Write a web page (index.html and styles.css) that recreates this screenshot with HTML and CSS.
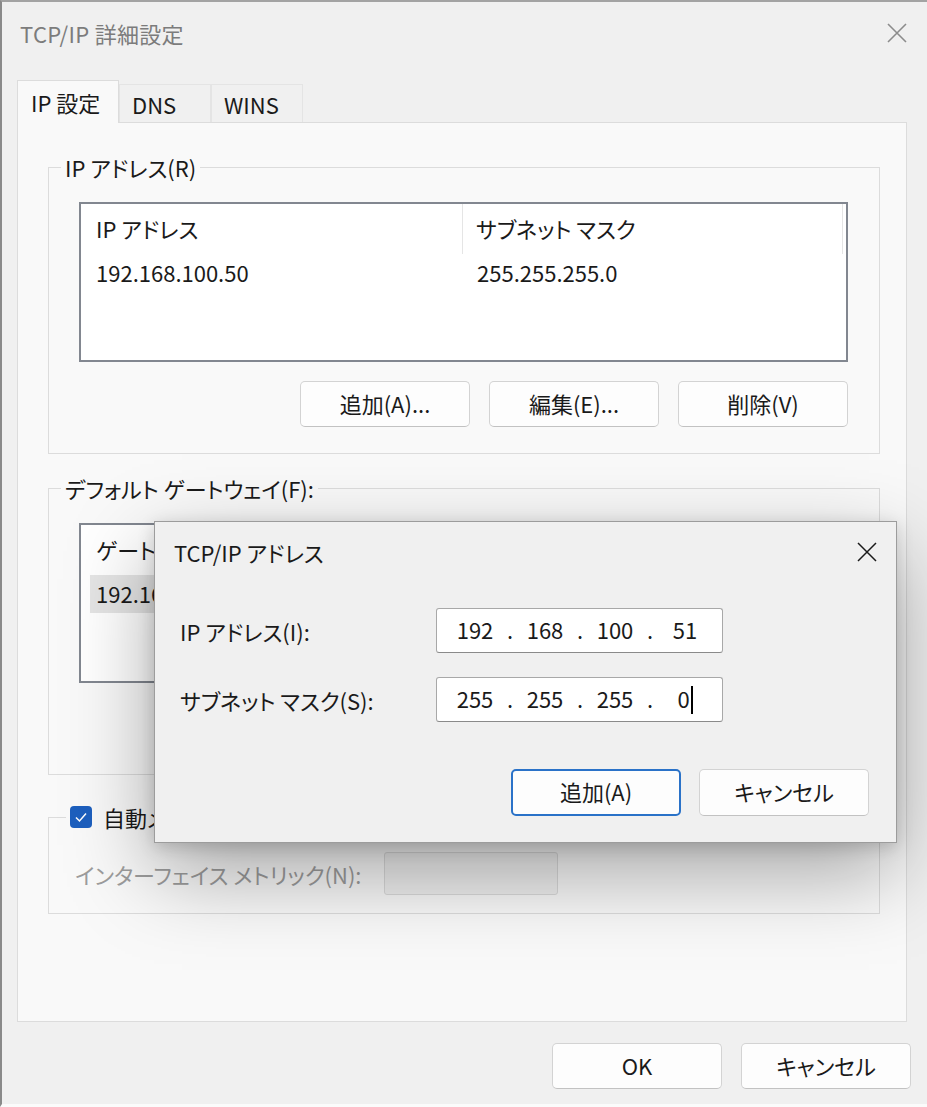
FILE: index.html
```html
<!DOCTYPE html>
<html lang="ja">
<head>
    <meta charset="UTF-8">
    <meta name="viewport" content="width=device-width, initial-scale=1.0">
    <title>TCP/IP 詳細設定</title>
    <link rel="stylesheet" href="styles.css">
</head>
<body>
    <div class="window">
        <div class="titlebar">
            <span class="title">TCP/IP 詳細設定</span>
            <span class="close-btn">
                <svg width="20" height="20" viewBox="0 0 20 20"><path d="M1 1 L19 19 M19 1 L1 19" stroke="#8c8c8c" stroke-width="1.6" fill="none"/></svg>
            </span>
        </div>

        <div class="tabs">
            <div class="tab selected">IP 設定</div>
            <div class="tab">DNS</div>
            <div class="tab">WINS</div>
        </div>

        <div class="tab-panel">
            <fieldset class="group">
                <legend>IP アドレス(R)</legend>
                <div class="group-body">
                    <div class="list">
                        <div class="list-head">
                            <div class="col">IP アドレス</div>
                            <div class="col">サブネット マスク</div>
                            <div class="col"></div>
                        </div>
                        <div class="list-row">
                            <div class="cell">192.168.100.50</div>
                            <div class="cell">255.255.255.0</div>
                        </div>
                    </div>
                    <div class="btn-row">
                        <button>追加(A)...</button>
                        <button>編集(E)...</button>
                        <button>削除(V)</button>
                    </div>
                </div>
            </fieldset>

            <fieldset class="group">
                <legend>デフォルト ゲートウェイ(F):</legend>
                <div class="group-body">
                    <div class="list">
                        <div class="list-head">
                            <div class="col">ゲートウェイ</div>
                            <div class="col">メトリック</div>
                            <div class="col"></div>
                        </div>
                        <div class="list-row selected">
                            <div class="cell">192.168.100.1</div>
                            <div class="cell">自動</div>
                        </div>
                    </div>
                    <!-- buttons of this group sit under the dialog -->
                    <div class="btn-row empty"></div>
                </div>
            </fieldset>

            <fieldset class="group metric-group">
                <legend>
                    <span class="checkbox checked">
                        <svg width="22" height="22" viewBox="0 0 22 22"><path d="M6 11.5 L9.5 15 L16 7.5" stroke="#fff" stroke-width="1.5" fill="none"/></svg>
                    </span>
                    <span>自動メトリック(U)</span>
                </legend>
                <div class="group-body metric-row">
                    <label class="disabled-label">インターフェイス メトリック(N):</label>
                    <div class="text-input disabled"></div>
                </div>
            </fieldset>
        </div>

        <div class="footer">
            <button>OK</button>
            <button>キャンセル</button>
        </div>
    </div>

    <!-- TCP/IP アドレス dialog, shown above the settings window -->
    <div class="modal">
        <div class="modal-titlebar">
            <span>TCP/IP アドレス</span>
            <span class="close-btn">
                <svg width="20" height="20" viewBox="0 0 20 20"><path d="M1 1 L19 19 M19 1 L1 19" stroke="#1a1a1a" stroke-width="1.5" fill="none"/></svg>
            </span>
        </div>
        <div class="modal-body">
            <div class="field-row">
                <label>IP アドレス(I):</label>
                <div class="ip-input">
                    <span class="seg">192</span><span class="dot">.</span>
                    <span class="seg">168</span><span class="dot">.</span>
                    <span class="seg">100</span><span class="dot">.</span>
                    <span class="seg">51</span>
                </div>
            </div>
            <div class="field-row">
                <label>サブネット マスク(S):</label>
                <div class="ip-input">
                    <span class="seg">255</span><span class="dot">.</span>
                    <span class="seg">255</span><span class="dot">.</span>
                    <span class="seg">255</span><span class="dot">.</span>
                    <span class="seg">0<span class="caret"></span></span>
                </div>
            </div>
            <div class="modal-buttons">
                <button class="default">追加(A)</button>
                <button>キャンセル</button>
            </div>
        </div>
    </div>
</body>
</html>
```

FILE: styles.css
```css
body {
    margin: 0;
    width: 927px;
    height: 1107px;
    overflow: hidden;
    background-color: #f0f0f0;
    font-family: "Noto Sans CJK JP", sans-serif;
    font-feature-settings: "palt";
    font-size: 22px;
    color: #1a1a1a;
}
.window {
    height: 1107px;
    box-sizing: border-box;
    border-left: 2px solid #8a8a8a;
    border-top: 2px solid #a3a3a3;
    border-bottom: 3px solid #fbfbfb;
}
.titlebar {
    height: 62px;
    display: flex;
    align-items: center;
    justify-content: space-between;
    padding: 0 20px 0 18px;
}
.title {
    color: #7c7c7c;
    letter-spacing: 0.3px;
}
.close-btn {
    display: flex;
    width: 20px;
    height: 20px;
}
.tabs {
    display: flex;
    align-items: flex-end;
    height: 42px;
    margin: 16px 0 0 15px;
}
.tab {
    height: 38px;
    min-width: 92px;
    box-sizing: border-box;
    display: flex;
    align-items: center;
    padding: 0 14px 0 12px;
    border: 1px solid #e4e4e4;
    border-bottom: none;
    background-color: #f0f0f0;
}
.tab.selected {
    height: 43px;
    min-width: 102px;
    margin-bottom: -1px;
    padding-left: 13px;
    background-color: #f9f9f9;
    border-color: #dcdcdc;
    position: relative;
    z-index: 1;
}
.tab-panel {
    margin-left: 15px;
    width: 890px;
    height: 900px;
    box-sizing: border-box;
    background-color: #f9f9f9;
    border: 1px solid #dcdcdc;
    padding: 30px 26px 0 30px;
}
.group {
    margin: 0;
    padding: 0;
    border: 1px solid #dcdcdc;
    min-width: 0;
}
.group + .group {
    margin-top: 20px;
}
.group legend {
    margin-left: 12px;
    padding: 0 4px;
    line-height: 28px;
    height: 28px;
}
.group-body {
    padding: 21px 31px 26px 30px;
}
.list {
    height: 160px;
    box-sizing: border-box;
    border: 2px solid #828790;
    background-color: #ffffff;
}
.list-head,
.list-row {
    display: grid;
    grid-template-columns: 382px 380px 1fr;
}
.list-head {
    height: 50px;
}
.list-head .col {
    display: flex;
    align-items: center;
    padding-left: 13px;
    padding-bottom: 3px;
}
.list-head .col:first-child {
    padding-left: 15px;
}
.list-head .col:not(:last-child) {
    border-right: 1px solid #e5e5e5;
}
.list-row {
    height: 38px;
    margin-left: 9px;
    grid-template-columns: 373px 380px;
}
.list-row .cell {
    display: flex;
    align-items: center;
    padding-left: 14px;
    padding-bottom: 3px;
}
.list-row .cell:first-child {
    padding-left: 6px;
}
.list-row.selected .cell {
    background-color: #e5e5e5;
}
.btn-row {
    display: flex;
    justify-content: flex-end;
    gap: 19px;
    margin-top: 19px;
}
.btn-row.empty {
    height: 46px;
}
button {
    width: 170px;
    height: 46px;
    font-family: inherit;
    font-feature-settings: "palt";
    font-size: 22px;
    color: #1a1a1a;
    background-color: #fdfdfd;
    border: 1px solid #d3d3d3;
    border-bottom-color: #c2c2c2;
    border-radius: 5px;
    padding: 0 0 3px;
}
.group + .metric-group {
    margin-top: 28px;
}
.metric-group legend {
    margin-left: 17px;
    display: flex;
    align-items: center;
    gap: 11px;
}
.checkbox {
    display: flex;
    width: 22px;
    height: 22px;
    border-radius: 4px;
    background-color: #1d5fbe;
}
.metric-row {
    display: flex;
    align-items: center;
    padding: 21px 0 18px 26px;
}
.disabled-label {
    width: 309px;
    color: #9d9d9d;
}
.text-input.disabled {
    width: 174px;
    height: 43px;
    box-sizing: border-box;
    border: 1px solid #dadada;
    border-radius: 3px;
    background-color: #f0f0f0;
}
.footer {
    display: flex;
    justify-content: flex-end;
    gap: 19px;
    margin-top: 21px;
    padding-right: 16px;
}

/* overlay dialog */
.modal {
    position: absolute;
    left: 154px;
    top: 521px;
    width: 743px;
    box-sizing: border-box;
    background-color: #f0f0f0;
    border: 1px solid #9c9c9c;
    box-shadow: 0 30px 80px rgba(0, 0, 0, 0.34), 0 4px 16px rgba(0, 0, 0, 0.16);
}
.modal-titlebar {
    height: 60px;
    display: flex;
    align-items: center;
    justify-content: space-between;
    padding: 0 19px 0 19px;
}
.modal-body {
    padding: 26px 27px 26px 25px;
}
.field-row {
    display: flex;
    align-items: center;
    height: 45px;
}
.field-row + .field-row {
    margin-top: 24px;
}
.field-row label {
    width: 256px;
}
.ip-input {
    width: 287px;
    height: 45px;
    box-sizing: border-box;
    display: flex;
    align-items: center;
    padding: 0 0 3px 10px;
    background-color: #ffffff;
    border: 1px solid #a8a8a8;
    border-bottom-color: #8a8a8a;
    border-radius: 3px;
}
.seg {
    width: 56px;
    text-align: center;
    display: flex;
    justify-content: center;
    align-items: center;
}
.dot {
    width: 14px;
    text-align: center;
}
.caret {
    display: inline-block;
    width: 2px;
    height: 28px;
    margin-left: 1px;
    margin-top: 3px;
    background-color: #000000;
}
.modal-buttons {
    display: flex;
    justify-content: flex-end;
    gap: 18px;
    margin-top: 47px;
}
.modal-buttons button {
    height: 47px;
}
.modal-buttons button.default {
    border: 2px solid #2a72c8;
}
```
